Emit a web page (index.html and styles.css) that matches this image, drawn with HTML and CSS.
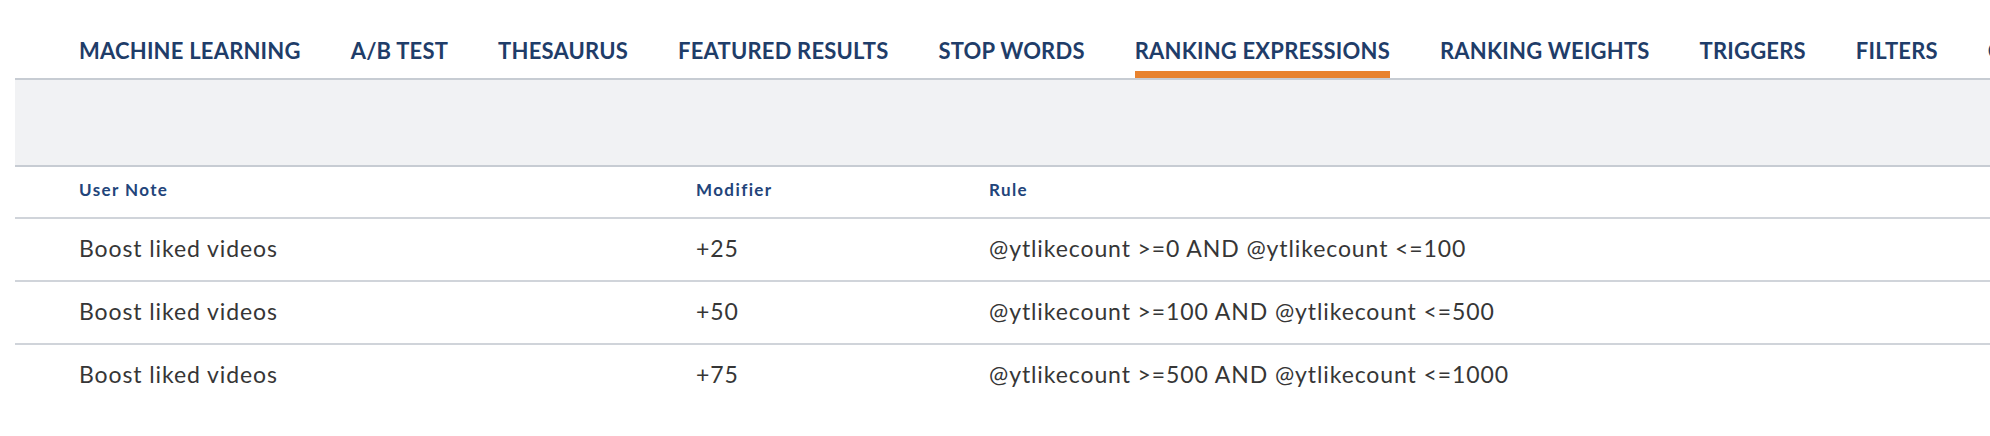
FILE: index.html
```html
<!DOCTYPE html>
<html lang="en">
<head>
<meta charset="utf-8">
<title>Ranking Expressions</title>
<link rel="stylesheet" href="styles.css">
</head>
<body>
<div class="page">
  <nav class="tabs">
    <a class="tab">MACHINE LEARNING</a>
    <a class="tab">A/B TEST</a>
    <a class="tab">THESAURUS</a>
    <a class="tab">FEATURED RESULTS</a>
    <a class="tab">STOP WORDS</a>
    <a class="tab tab-active">RANKING EXPRESSIONS</a>
    <a class="tab">RANKING WEIGHTS</a>
    <a class="tab">TRIGGERS</a>
    <a class="tab">FILTERS</a>
    <a class="tab">QUERY SUGGESTIONS</a>
  </nav>
  <div class="toolbar"></div>
  <div class="table">
    <div class="row head">
      <div class="cell">User Note</div>
      <div class="cell">Modifier</div>
      <div class="cell">Rule</div>
    </div>
    <div class="row">
      <div class="cell">Boost liked videos</div>
      <div class="cell">+25</div>
      <div class="cell">@ytlikecount &gt;=0 AND @ytlikecount &lt;=100</div>
    </div>
    <div class="row">
      <div class="cell">Boost liked videos</div>
      <div class="cell">+50</div>
      <div class="cell">@ytlikecount &gt;=100 AND @ytlikecount &lt;=500</div>
    </div>
    <div class="row last">
      <div class="cell">Boost liked videos</div>
      <div class="cell">+75</div>
      <div class="cell">@ytlikecount &gt;=500 AND @ytlikecount &lt;=1000</div>
    </div>
  </div>
</div>
</body>
</html>
```

FILE: styles.css
```css
html, body {
  margin: 0;
  padding: 0;
  background: #ffffff;
}

body {
  font-family: Lato, "Open Sans", sans-serif;
  overflow: hidden;
}

.page {
  padding-left: 15px;
}

.tabs {
  display: flex;
  gap: 50px;
  padding-left: 64px;
  height: 78px;
  align-items: flex-end;
  overflow: hidden;
  white-space: nowrap;
}

.tab {
  font-size: 22px;
  line-height: 26px;
  font-weight: 700;
  letter-spacing: 0.2px;
  color: #1f3d69;
  padding-bottom: 7px;
  border-bottom: 7px solid transparent;
  flex: none;
}

.tab-active {
  border-bottom-color: #e8822e;
}

.toolbar {
  height: 85px;
  background: #f1f2f4;
  border-top: 2px solid #c7ccd3;
  border-bottom: 2px solid #c7ccd3;
}

.row {
  display: grid;
  grid-template-columns: 617px 293px 1fr;
  padding-left: 64px;
  padding-bottom: 4px;
  height: 57px;
  align-items: center;
  border-bottom: 2px solid #d0d4da;
  font-size: 23px;
  letter-spacing: 0.9px;
  color: #363636;
  white-space: nowrap;
}

.row.head {
  height: 44px;
  padding-bottom: 6px;
  font-size: 17px;
  letter-spacing: 1.4px;
  font-weight: 700;
  color: #22447a;
}

.row.last {
  border-bottom: none;
}
```
